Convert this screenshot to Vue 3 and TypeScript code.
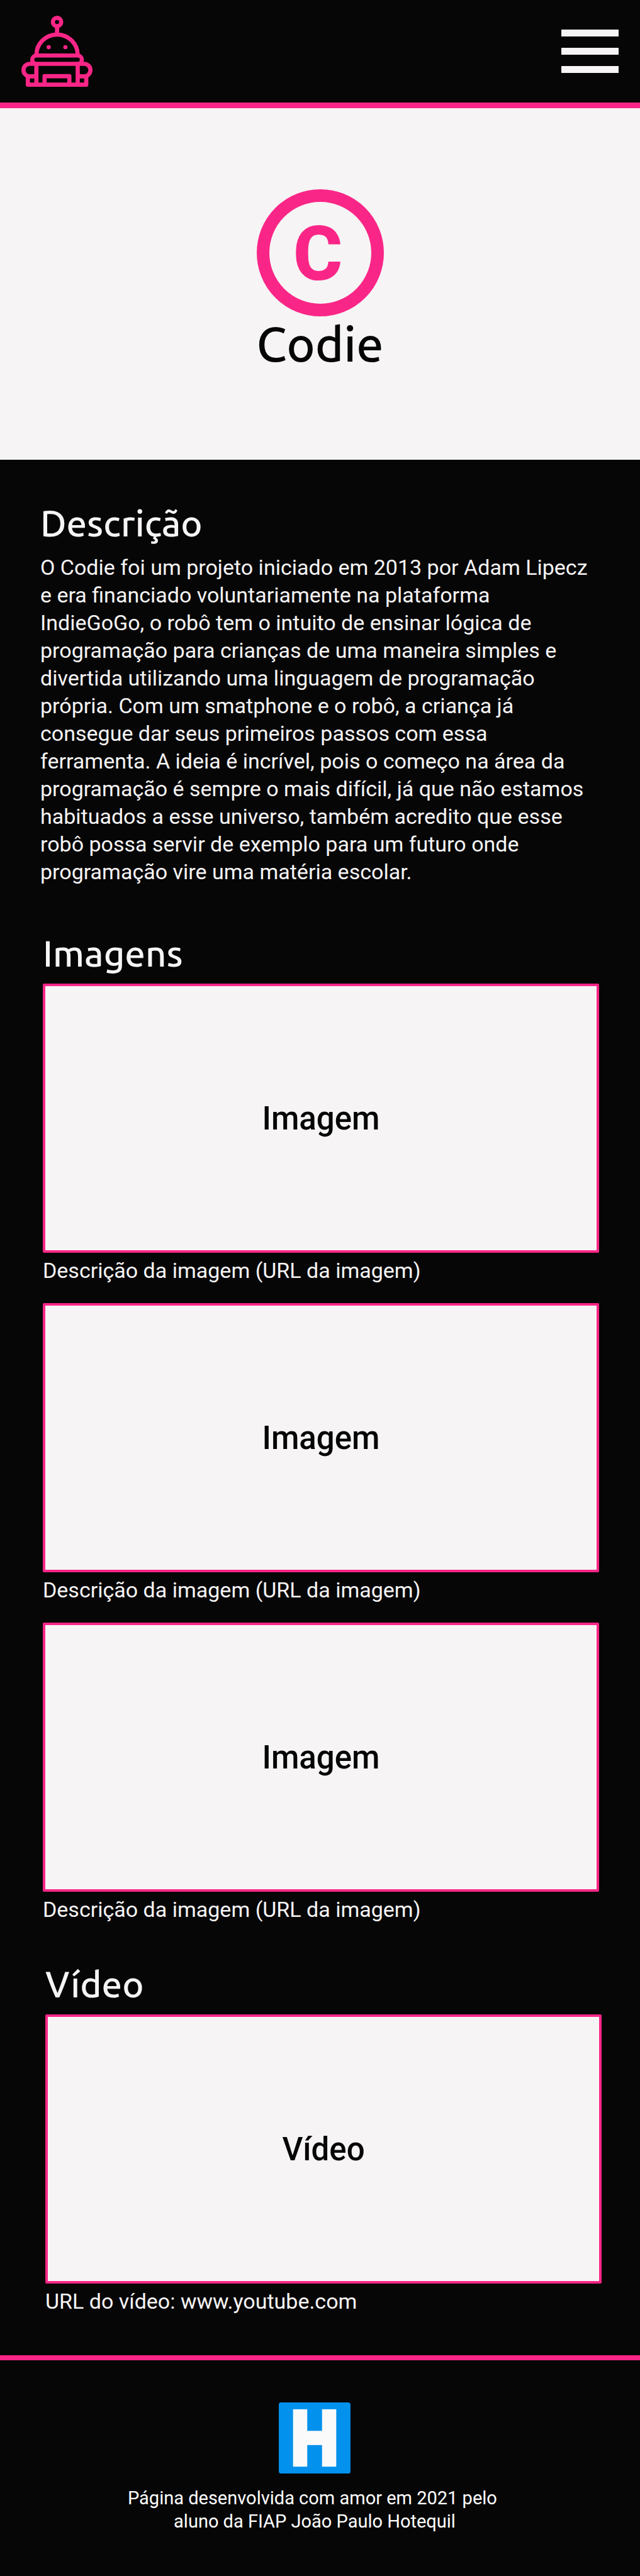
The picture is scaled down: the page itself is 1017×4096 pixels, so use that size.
<script setup lang="ts">
interface Picture {
  id: number
  label: string
  caption: string
}

const description =
  'O Codie foi um projeto iniciado em 2013 por Adam Lipecz e era financiado voluntariamente na plataforma IndieGoGo, o robô tem o intuito de ensinar lógica de programação para crianças de uma maneira simples e divertida utilizando uma linguagem de programação própria. Com um smatphone e o robô, a criança já consegue dar seus primeiros passos com essa ferramenta. A ideia é incrível, pois o começo na área da programação é sempre o mais difícil, já que não estamos habituados a esse universo, também acredito que esse robô possa servir de exemplo para um futuro onde programação vire uma matéria escolar.'

const pictures: Picture[] = [1, 2, 3].map((id) => ({
  id,
  label: 'Imagem',
  caption: 'Descrição da imagem (URL da imagem)',
}))
</script>

<template>
  <div class="page">
    <header class="topbar">
      <a class="home" href="#" aria-label="Início">
        <svg class="robot" viewBox="0 0 375 375" aria-hidden="true">
          <g fill="none" stroke="currentColor" stroke-width="22" stroke-linejoin="round">
            <circle cx="188" cy="33" r="22" />
            <path d="M188 55V99" />
            <path d="M79 208a109 109 0 0 1 218 0" />
            <rect x="57" y="210" width="262" height="44" rx="22" />
            <path d="M79 254V364M297 254V364" />
            <path d="M79 254H44a33 33 0 0 0 0 66H79" />
            <path d="M297 254H331a33 33 0 0 1 0 66H297" />
            <path d="M34 316V364H342V316" />
            <path d="M122 364V319H253V364" />
          </g>
          <circle cx="144" cy="166" r="11" fill="currentColor" />
          <circle cx="232" cy="166" r="11" fill="currentColor" />
        </svg>
      </a>
      <button class="menu" type="button" aria-label="Menu">
        <span class="bar"></span>
        <span class="bar"></span>
        <span class="bar"></span>
      </button>
    </header>

    <main>
      <section class="hero">
        <svg class="emblem" viewBox="0 0 202 202" aria-hidden="true">
          <circle cx="101" cy="101" r="91" fill="none" stroke="currentColor" stroke-width="20" />
          <text class="emblem-letter" x="97" y="144" text-anchor="middle" fill="currentColor">C</text>
        </svg>
        <h1 class="name">Codie</h1>
      </section>

      <section class="about">
        <h2 class="heading">Descrição</h2>
        <p class="text">{{ description }}</p>
      </section>

      <section class="images">
        <h2 class="heading">Imagens</h2>
        <figure v-for="picture in pictures" :key="picture.id" class="media">
          <div class="frame">{{ picture.label }}</div>
          <figcaption class="caption">{{ picture.caption }}</figcaption>
        </figure>
      </section>

      <section class="video">
        <h2 class="heading">Vídeo</h2>
        <figure class="media">
          <div class="frame">Vídeo</div>
          <figcaption class="caption">
            URL do vídeo: <a href="https://www.youtube.com">www.youtube.com</a>
          </figcaption>
        </figure>
      </section>
    </main>

    <footer class="footer">
      <svg class="badge" viewBox="0 0 126 125" aria-hidden="true">
        <rect width="126" height="125" rx="4" fill="#0291ed" />
        <g fill="#fafafa">
          <rect x="25" y="12" width="25" height="101" />
          <rect x="76" y="12" width="25" height="101" />
          <rect x="48" y="50" width="30" height="25" />
        </g>
      </svg>
      <p class="credit">
        Página desenvolvida com amor em 2021 pelo&nbsp;<br />aluno da FIAP João Paulo Hotequil
      </p>
    </footer>
  </div>
</template>

<style>
body {
  margin: 0;
  background: #060606;
}
</style>

<style scoped>
.page {
  --pink: #fa2687;
  --light: #f6f4f5;
  --dark: #060606;
  background: var(--dark);
  color: var(--light);
  font-family: Roboto, "Liberation Sans", sans-serif;
}

.topbar {
  display: flex;
  align-items: center;
  justify-content: space-between;
  padding: 25px 34px;
  border-bottom: 9px solid var(--pink);
}

.home {
  display: block;
  color: var(--pink);
}

.robot {
  display: block;
  width: 113px;
  height: 113px;
}

.menu {
  display: flex;
  flex-direction: column;
  gap: 18px;
  width: 91px;
  padding: 0;
  border: 0;
  background: none;
  cursor: pointer;
}

.bar {
  height: 11px;
  background: var(--light);
}

.hero {
  display: flex;
  flex-direction: column;
  align-items: center;
  padding: 129px 0 140px;
  background: var(--light);
  color: var(--dark);
}

.emblem {
  display: block;
  width: 202px;
  height: 202px;
  color: var(--pink);
}

.emblem-letter {
  font-size: 120px;
  font-weight: 800;
}

.name,
.heading {
  margin: 0;
  font-family: Ubuntu, "Open Sans", sans-serif;
  font-weight: 500;
}

.name {
  font-size: 77px;
  line-height: 88px;
}

.heading {
  margin-bottom: 16px;
  font-size: 58px;
  line-height: 64px;
}

.about {
  padding: 69px 77px 76px 64px;
}

.images {
  padding: 0 65px 65px 68px;
}

.video {
  padding: 0 61px 64px 72px;
}

.text,
.caption {
  margin: 0;
  font-size: 34px;
  line-height: 44px;
}

.media {
  margin: 0;
}

.media + .media {
  margin-top: 30px;
}

.frame {
  display: flex;
  align-items: center;
  justify-content: center;
  box-sizing: border-box;
  aspect-ratio: 221 / 107;
  border: 4px solid var(--pink);
  border-radius: 2px;
  background: var(--light);
  color: var(--dark);
  font-size: 51px;
  font-weight: 500;
}

.caption {
  margin-top: 6px;
}

.caption a {
  color: inherit;
  text-decoration: none;
}

.footer {
  display: flex;
  flex-direction: column;
  align-items: center;
  padding: 67px 17px 68px 0;
  border-top: 8px solid var(--pink);
}

.badge {
  display: block;
  width: 114px;
  height: 113px;
}

.credit {
  margin: 21px 0 0;
  color: #fff;
  font-size: 29px;
  line-height: 37px;
  text-align: center;
}
</style>
